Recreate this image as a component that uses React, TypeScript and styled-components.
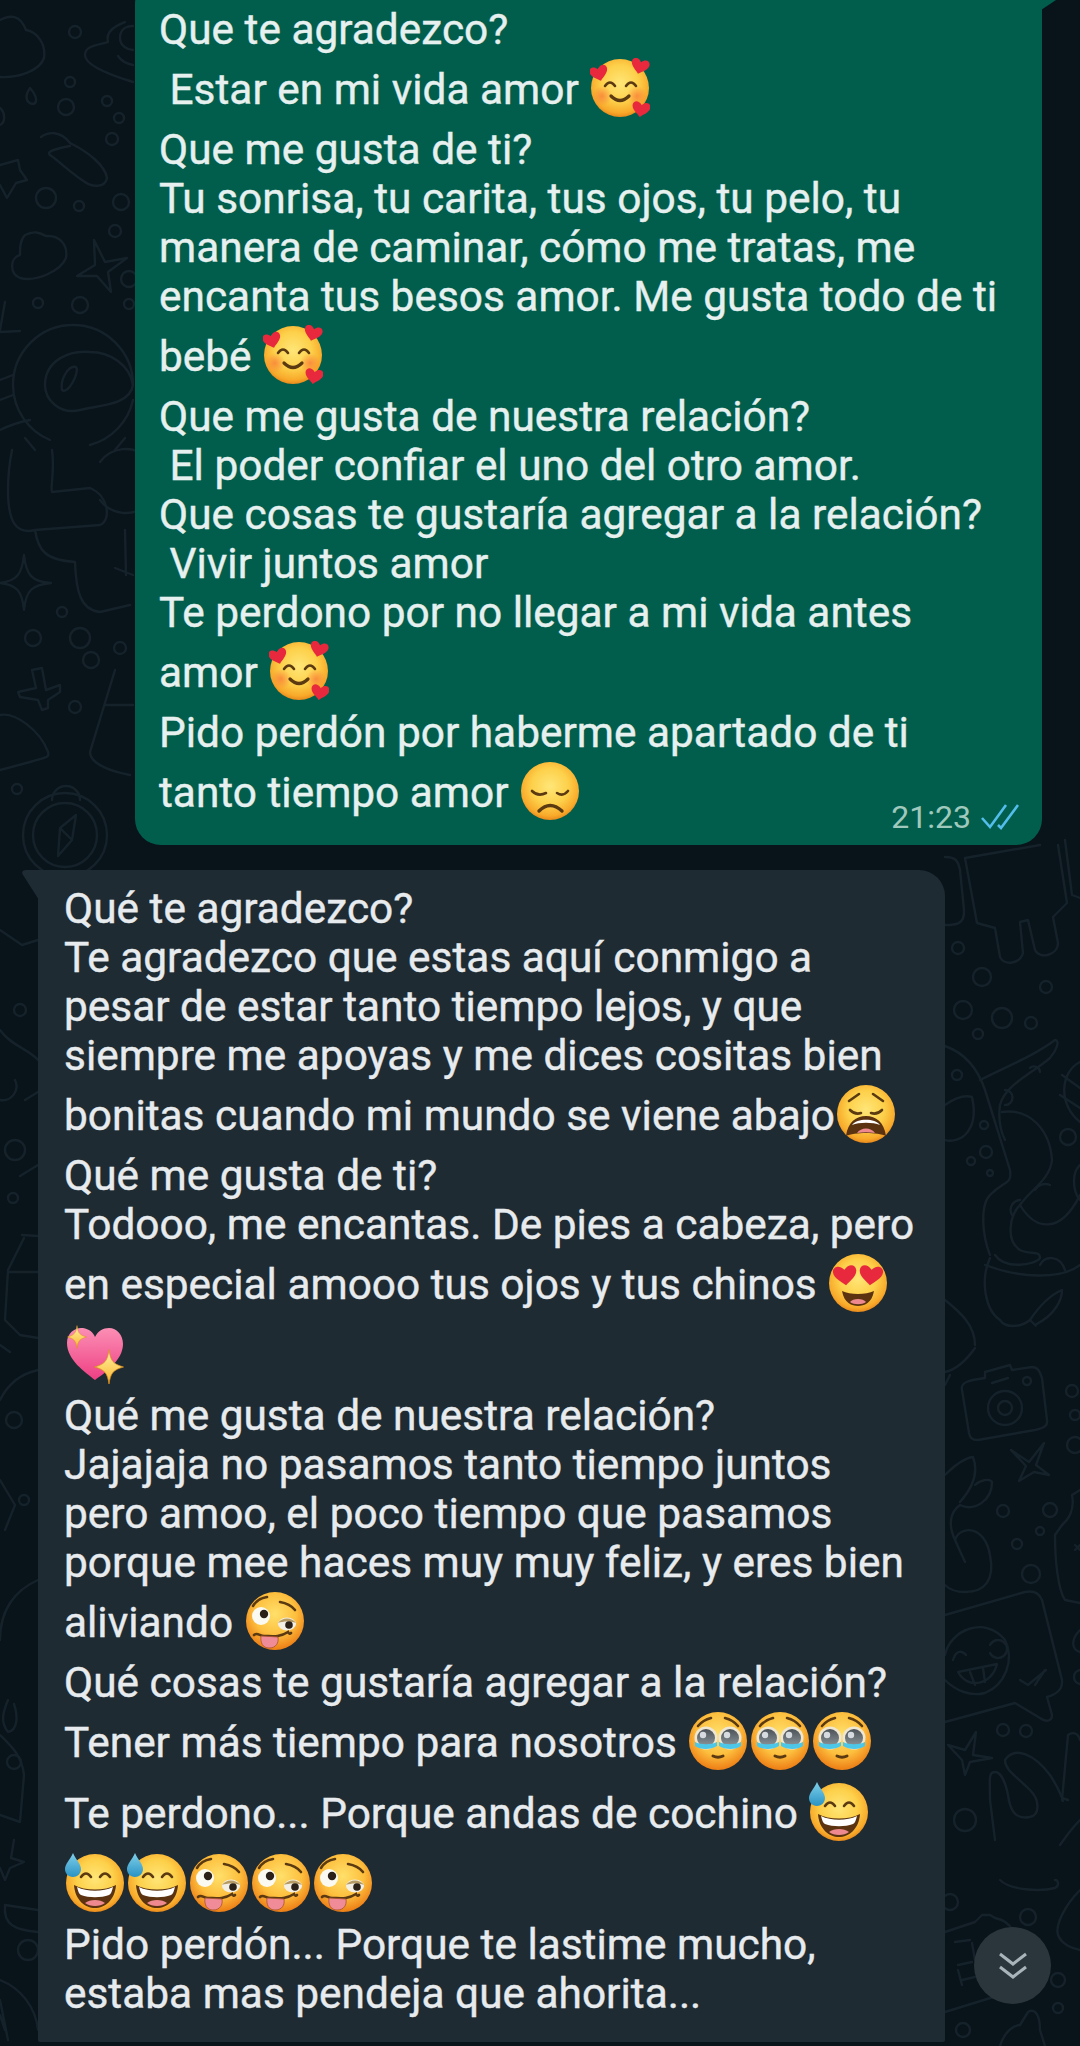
import React from 'react'
import styled, { createGlobalStyle } from 'styled-components'

const GlobalStyle = createGlobalStyle`
  html, body {
    margin: 0;
    padding: 0;
    background: #08131a;
  }
`

const Page = styled.div`
  position: relative;
  width: 1080px;
  height: 2046px;
  overflow: hidden;
  background: #08131a;
  font-family: Roboto, 'Liberation Sans', sans-serif;
`

const Wallpaper = styled.svg`
  position: absolute;
  left: 0;
  top: 0;
  width: 1080px;
  height: 2046px;
  fill: none;
  stroke: #16222a;
  stroke-width: 2.4;
  stroke-linecap: round;
  stroke-linejoin: round;
`

const Chat = styled.div`
  position: relative;
  display: flex;
  flex-direction: column;
  gap: 25px;
  margin-top: -22px;
`

const Bubble = styled.div<{ $out?: boolean }>`
  position: relative;
  box-sizing: border-box;
  width: 907px;
  margin-left: ${(p) => (p.$out ? '135px' : '38px')};
  padding: ${(p) => (p.$out ? '27px 24px 17px' : '14px 24px 24px 26px')};
  border-radius: ${(p) => (p.$out ? '26px' : '0 26px 2px 2px')};
  background: ${(p) => (p.$out ? '#025e4c' : '#1f2b33')};
  color: ${(p) => (p.$out ? '#e6f0ef' : '#e7ebee')};
`

const InTail = styled.svg`
  position: absolute;
  left: -16px;
  top: 0;
  width: 17px;
  height: 30px;
`

const OutTail = styled.svg`
  position: absolute;
  right: -14px;
  top: 22px;
  width: 15px;
  height: 10px;
`

const Line = styled.div<{ $tall?: boolean }>`
  height: ${(p) => (p.$tall ? '71px' : '49px')};
  line-height: ${(p) => (p.$tall ? '71px' : '49px')};
  font-size: 42.4px;
  -webkit-text-stroke: 0.4px currentColor;
  white-space: pre;
`

const EmojiBox = styled.svg`
  display: inline-block;
  width: 60px;
  height: 60px;
  margin: 0 1px;
  vertical-align: -14px;
`

const Meta = styled.div`
  position: absolute;
  right: 23px;
  bottom: 10px;
  display: flex;
  align-items: center;
  gap: 10px;
  height: 36px;
  font-size: 32px;
  color: #a0c9be;
`

const ScrollButton = styled.div`
  position: absolute;
  left: 974px;
  top: 1927px;
  display: flex;
  align-items: center;
  justify-content: center;
  width: 77px;
  height: 77px;
  border-radius: 50%;
  background: #2b363c;
`

const heart = (x: number, y: number, s: number, rot = 0, fill = '#e8283c') => (
  <path
    d='M0 8 C-3 5 -9 2 -9 -3 C-9 -7 -4 -9 0 -4 C4 -9 9 -7 9 -3 C9 2 3 5 0 8 Z'
    fill={fill}
    transform={`translate(${x} ${y}) rotate(${rot}) scale(${s})`}
  />
)

const Defs = () => (
  <svg width='0' height='0' style={{ position: 'absolute' }}>
    <defs>
      <radialGradient id='face' cx='50%' cy='42%' r='58%'>
        <stop offset='0%' stopColor='#ffe678' />
        <stop offset='55%' stopColor='#fdd04a' />
        <stop offset='88%' stopColor='#f8a92a' />
        <stop offset='100%' stopColor='#e98a1c' />
      </radialGradient>
      <radialGradient id='warm' cx='50%' cy='38%' r='60%'>
        <stop offset='0%' stopColor='#ffe06a' />
        <stop offset='60%' stopColor='#fdbf3e' />
        <stop offset='100%' stopColor='#ee8218' />
      </radialGradient>
      <radialGradient id='blush' cx='50%' cy='50%' r='50%'>
        <stop offset='0%' stopColor='#f9803c' stopOpacity='0.8' />
        <stop offset='100%' stopColor='#f9803c' stopOpacity='0' />
      </radialGradient>
      <linearGradient id='pink' x1='0' y1='0' x2='0' y2='1'>
        <stop offset='0%' stopColor='#fb8fb4' />
        <stop offset='100%' stopColor='#ee3f83' />
      </linearGradient>
      <linearGradient id='drop' x1='0' y1='0' x2='0' y2='1'>
        <stop offset='0%' stopColor='#7fd0ea' />
        <stop offset='100%' stopColor='#2a93c4' />
      </linearGradient>
      <linearGradient id='gold' x1='0' y1='0' x2='0' y2='1'>
        <stop offset='0%' stopColor='#fff3a8' />
        <stop offset='100%' stopColor='#f9b52a' />
      </linearGradient>
      <linearGradient id='iris' x1='0' y1='0' x2='0' y2='1'>
        <stop offset='0%' stopColor='#4c5359' />
        <stop offset='100%' stopColor='#8d979c' />
      </linearGradient>
    </defs>
  </svg>
)

const ink = { fill: 'none', stroke: '#5b3a12', strokeWidth: 2.6, strokeLinecap: 'round' } as const

const sparkle = (x: number, y: number, s: number) => (
  <path
    d='M0 -12 C1 -4 3 -2 10 0 C3 2 1 4 0 12 C-1 4 -3 2 -10 0 C-3 -2 -1 -4 0 -12 Z'
    fill='url(#gold)'
    stroke='#d98a1a'
    strokeWidth='0.5'
    transform={`translate(${x} ${y}) scale(${s})`}
  />
)

type EmojiName = 'hearts' | 'sad' | 'weary' | 'love' | 'sparkle' | 'woozy' | 'plead' | 'sweat'

const Emoji = ({ name }: { name: EmojiName }) => {
  if (name === 'sparkle') {
    return (
      <EmojiBox viewBox='0 0 60 60'>
        <path
          d='M30 56 C20 48 2 36 2 19 C2 8 11 3 18 4 C24 5 28 8 30 13 C33 7 38 4 44 4 C52 4 58 11 58 20 C58 36 40 49 30 56 Z'
          fill='url(#pink)'
        />
        {sparkle(12, 13, 0.95)}
        {sparkle(44, 43, 1.45)}
      </EmojiBox>
    )
  }
  const body = name === 'plead' || name === 'woozy' ? 'url(#warm)' : 'url(#face)'
  return (
    <EmojiBox viewBox='0 0 60 60'>
      <circle cx='30' cy='30' r='29' fill={body} />
      {name === 'hearts' && (
        <>
          <circle cx='12' cy='38' r='10' fill='url(#blush)' />
          <circle cx='47' cy='38' r='10' fill='url(#blush)' />
          <path d='M15 28 q5 -7 10 0' {...ink} />
          <path d='M36 28 q5 -7 10 0' {...ink} />
          <path d='M21 38 q9 9 18 0' {...ink} strokeWidth='3.2' />
          {heart(9, 15, 1.0, -15)}
          {heart(50, 8, 1.0, 15)}
          {heart(51, 51, 1.0, 10)}
        </>
      )}
      {name === 'sad' && (
        <>
          <path d='M12 30 q6 6 14 2' {...ink} />
          <path d='M37 32 q6 4 11 -2' {...ink} />
          <path d='M19 50 q11 -11 23 0' {...ink} strokeWidth='3.4' />
        </>
      )}
      {name === 'weary' && (
        <>
          <path d='M13 17 L23 10' {...ink} />
          <path d='M47 17 L37 10' {...ink} />
          <path d='M14 26 q5 5 11 3' {...ink} />
          <path d='M46 26 q-5 5 -11 3' {...ink} />
          <path d='M10 52 C12 38 20 32 30 32 C40 32 48 38 50 52 C42 48 18 48 10 52 Z' fill='#5b3310' />
          <path d='M16 41 C21 34 39 34 44 41 C37 38 23 38 16 41 Z' fill='#fff' />
          <path d='M21 49 C25 43 35 43 39 49 C33 48 27 48 21 49 Z' fill='#ee8a8f' />
        </>
      )}
      {name === 'love' && (
        <>
          {heart(17, 22, 1.3, -6)}
          {heart(43, 22, 1.3, 6)}
          <path d='M14 38 C22 42 38 42 46 38 C44 50 36 53 30 53 C24 53 16 50 14 38 Z' fill='#5b3310' />
          <path d='M22 49 C25 45 35 45 38 49 C34 52 26 52 22 49 Z' fill='#ee8a8f' />
        </>
      )}
      {name === 'woozy' && (
        <>
          <path d='M8 15 C11 10 16 7 22 6' {...ink} />
          <path d='M35 11 C41 12 46 14 50 19' {...ink} />
          <circle cx='16' cy='25' r='9' fill='#fbfaf2' />
          <circle cx='19' cy='23' r='4.2' fill='#2b2118' />
          <ellipse cx='42' cy='33' rx='9' ry='6.5' fill='#f3efe4' />
          <path d='M33 32 C37 26 47 26 51 32 C46 30 38 30 33 32 Z' fill='#b59a63' />
          <circle cx='44' cy='34' r='3.8' fill='#2b2118' />
          <path d='M9 44 C12 41 15 45 19 45 C26 45 34 47 43 41 C44 43 45 43 46 42' {...ink} />
          <path d='M16 45 C15 52 18 57 24 57 C31 57 34 52 33 46 Z' fill='#f08c98' stroke='#a8512f' strokeWidth='0.8' />
        </>
      )}
      {name === 'plead' && (
        <>
          <path d='M10 15 q5 -6 13 -8' {...ink} />
          <path d='M37 7 q8 2 13 8' {...ink} />
          <circle cx='18' cy='27' r='11.5' fill='#efe7d2' />
          <circle cx='42' cy='27' r='11.5' fill='#efe7d2' />
          <circle cx='18' cy='27' r='9' fill='url(#iris)' />
          <circle cx='42' cy='27' r='9' fill='url(#iris)' />
          <circle cx='15' cy='24' r='3.2' fill='#d5dbde' />
          <circle cx='39' cy='24' r='3.2' fill='#d5dbde' />
          <path d='M7 31 C13 34 23 34 29 31 L29 35 C23 39 12 39 7 35 Z' fill='#4cc7e8' />
          <path d='M31 31 C37 34 47 34 53 31 L53 35 C48 39 37 39 31 35 Z' fill='#4cc7e8' />
          <path d='M25 45 q5 2.5 10 0' {...ink} strokeWidth='3' />
        </>
      )}
      {name === 'sweat' && (
        <>
          <path d='M16 24 q5 -7 10 0' {...ink} />
          <path d='M35 24 q5 -7 10 0' {...ink} />
          <path d='M9 32 C20 38 40 38 51 32 C50 47 40 55 30 55 C20 55 10 47 9 32 Z' fill='#5b3310' />
          <path d='M12 34 C22 39 38 39 48 34 C47 38 46 41 44 42 C36 45 24 45 16 42 C14 41 13 38 12 34 Z' fill='#fff' />
          <path d='M20 50 C25 46 35 46 40 50 C35 54 25 54 20 50 Z' fill='#ee8a8f' />
          <path d='M8 0 C11 7 16 11 16 16 C16 21 12 24 8 24 C3 24 0 20 0 16 C0 11 5 7 8 0 Z' fill='url(#drop)' />
        </>
      )}
    </EmojiBox>
  )
}

type Row = { text?: string; emojis?: EmojiName[] }

const sent: Row[] = [
  { text: 'Que te agradezco?' },
  { text: ' Estar en mi vida amor ', emojis: ['hearts'] },
  { text: 'Que me gusta de ti?' },
  { text: 'Tu sonrisa, tu carita, tus ojos, tu pelo, tu' },
  { text: 'manera de caminar, cómo me tratas, me' },
  { text: 'encanta tus besos amor. Me gusta todo de ti' },
  { text: 'bebé ', emojis: ['hearts'] },
  { text: 'Que me gusta de nuestra relación?' },
  { text: ' El poder confiar el uno del otro amor.' },
  { text: 'Que cosas te gustaría agregar a la relación?' },
  { text: ' Vivir juntos amor' },
  { text: 'Te perdono por no llegar a mi vida antes' },
  { text: 'amor ', emojis: ['hearts'] },
  { text: 'Pido perdón por haberme apartado de ti' },
  { text: 'tanto tiempo amor ', emojis: ['sad'] },
]

const received: Row[] = [
  { text: 'Qué te agradezco?' },
  { text: 'Te agradezco que estas aquí conmigo a' },
  { text: 'pesar de estar tanto tiempo lejos, y que' },
  { text: 'siempre me apoyas y me dices cositas bien' },
  { text: 'bonitas cuando mi mundo se viene abajo', emojis: ['weary'] },
  { text: 'Qué me gusta de ti?' },
  { text: 'Todooo, me encantas. De pies a cabeza, pero' },
  { text: 'en especial amooo tus ojos y tus chinos ', emojis: ['love'] },
  { emojis: ['sparkle'] },
  { text: 'Qué me gusta de nuestra relación?' },
  { text: 'Jajajaja no pasamos tanto tiempo juntos' },
  { text: 'pero amoo, el poco tiempo que pasamos' },
  { text: 'porque mee haces muy muy feliz, y eres bien' },
  { text: 'aliviando ', emojis: ['woozy'] },
  { text: 'Qué cosas te gustaría agregar a la relación?' },
  { text: 'Tener más tiempo para nosotros ', emojis: ['plead', 'plead', 'plead'] },
  { text: 'Te perdono... Porque andas de cochino ', emojis: ['sweat'] },
  { emojis: ['sweat', 'sweat', 'woozy', 'woozy', 'woozy'] },
  { text: 'Pido perdón... Porque te lastime mucho,' },
  { text: 'estaba mas pendeja que ahorita...' },
]

const Rows = ({ rows }: { rows: Row[] }) => (
  <>
    {rows.map((row, i) => (
      <Line key={i} $tall={!!row.emojis}>
        {row.text}
        {row.emojis?.map((name, j) => <Emoji key={j} name={name} />)}
      </Line>
    ))}
  </>
)

// x, y, r of the small rings scattered over the wallpaper
const rings = [
  [75, 32, 6], [70, 82, 5], [66, 107, 8], [107, 101, 5], [119, 118, 5], [112, 139, 6], [46, 198, 10],
  [79, 206, 5], [121, 202, 8], [115, 231, 6], [38, 303, 5], [80, 305, 8], [129, 279, 8], [129, 304, 5],
  [62, 612, 5], [33, 638, 8], [80, 638, 10], [91, 660, 8], [120, 648, 6], [75, 707, 6], [17, 789, 5],
  [958, 948, 6], [982, 977, 9], [963, 1010, 9], [1002, 1018, 10], [1031, 1023, 6], [978, 1034, 5], [1046, 987, 6],
  [957, 1075, 5], [984, 1125, 4], [986, 1152, 6], [971, 1161, 4], [990, 1173, 3], [1068, 1137, 8],
  [1003, 1511, 6], [1050, 1510, 7], [1040, 1531, 4], [1017, 1544, 5], [1031, 1574, 9],
  [1072, 1391, 6], [1075, 1415, 5], [1075, 1445, 8], [1003, 1730, 6], [1026, 1731, 6], [965, 1820, 11],
  [950, 1902, 8], [1028, 1917, 8], [1058, 1980, 7], [1058, 2008, 5], [963, 2030, 7],
  [15, 1150, 10], [13, 1198, 5], [28, 1950, 10], [14, 1762, 7], [20, 1010, 6], [14, 1420, 8], [24, 1500, 5],
]

const doodles = [
  // top left clouds and comet
  'M0 20 C10 15 20 14 26 30 C38 32 46 45 44 58 C40 70 20 78 0 77',
  'M30 88 C25 95 25 103 33 104 C38 103 37 96 30 88 Z',
  'M0 108 C5 112 6 122 0 125',
  'M41 137 C48 132 60 130 70 143 C88 152 105 165 107 178 C105 188 92 188 82 180 C70 172 60 162 50 155 C45 151 60 148 70 146',
  'M0 165 L18 160 L20 170 L27 180 L16 183 L7 198 L0 185',
  'M25 235 C35 230 40 233 46 236 C60 235 68 245 66 258 C60 272 35 282 20 278 C10 274 9 258 20 255 C20 248 20 240 25 235 Z',
  'M94 240 L105 262 L127 258 L108 272 L111 292 L97 276 L77 276 L95 265 Z',
  'M133 82 C110 75 85 65 85 55 C85 45 100 45 108 42 C105 30 118 25 125 22',
  'M118 56 C122 62 128 64 133 65',
  'M120 38 C120 28 128 26 133 26 M120 38 C120 46 128 50 133 50',
  'M0 330 L5 302 M0 332 L20 331',
  // planet
  'M13 385 A60 60 0 1 1 133 385 M13 385 A60 60 0 0 0 50 440 M90 445 A60 60 0 0 0 133 400',
  'M45 385 C45 360 70 350 90 352 C110 352 130 365 133 385 C130 405 100 405 80 410 C60 415 45 400 45 385 Z',
  'M62 390 C60 380 68 365 76 367 C80 372 68 395 62 390 Z',
  'M0 430 C10 425 20 422 30 420 M35 450 L25 438 M115 450 L125 438 M13 375 L0 380 M13 395 L0 400',
  // astronaut bits
  'M52 450 C55 470 50 490 52 492 L90 488 C108 495 112 520 100 525 L35 530 C15 535 8 520 8 490 C8 470 10 460 12 450',
  'M35 530 C38 550 45 560 75 562 C76 590 80 610 100 612 L130 605 M115 568 L133 575 M125 530 L126 575',
  'M100 462 A32 32 0 1 1 100 500',
  'M24 555 C26 575 32 582 51 583 C32 585 26 590 24 610 C22 590 16 585 0 583 C16 581 22 575 24 555 Z',
  'M32 670 L42 668 L46 690 L60 685 L60 692 L48 700 L48 708 L42 710 L38 700 L20 697 L18 692 L36 688 Z',
  'M0 715 C15 712 40 730 48 752 C50 758 45 757 30 762 L0 770',
  'M115 670 L90 752 C90 765 115 772 130 775 M105 705 L133 705',
  // compass
  'M23 835 A42 42 0 1 0 107 835 A42 42 0 1 0 23 835 Z',
  'M33 835 A32 32 0 1 0 97 835 A32 32 0 1 0 33 835 Z',
  'M52 800 A14 14 0 1 1 80 800',
  'M58 856 L60 828 L76 815 L72 840 Z M60 828 L72 840',
  // lower left strip
  'M8 1700 C3 1712 0 1722 8 1732 C18 1730 18 1716 14 1704',
  'M0 1735 C10 1745 22 1755 24 1775 L20 1822 L0 1815',
  'M14 1840 L11 1858 L24 1862 L10 1868 L5 1880 L0 1868',
  'M5 1905 L38 1910 M5 1905 C3 1925 15 1930 38 1932',
  'M0 1980 A60 60 0 0 1 38 2030 M0 2000 L8 2040 M0 2015 L5 2030',
  'M22 1235 L38 1236 M24 1238 L8 1270 L5 1320 L20 1335 L38 1338 M8 1272 L38 1272',
  'M38 1165 L20 1176 M0 1345 L10 1352 M38 1370 C15 1375 5 1390 0 1400',
  'M15 1080 A14 14 0 0 1 0 1100 M38 1092 L25 1100',
  'M0 930 L22 945 L38 940 M0 1030 C10 1045 30 1050 38 1060',
  'M0 1480 L15 1505 L5 1530 M38 1580 C15 1590 0 1610 0 1640',
  // mitt under the sent bubble
  'M965 858 L1040 845 M965 858 L977 923 L995 928 L1000 957 C1004 966 1020 964 1023 953 L1020 922 L1028 920 L1035 950 C1040 960 1058 955 1058 943 L1053 917 L1067 903 L1058 845',
  'M945 857 C955 857 958 860 960 870 L964 910 C965 925 955 925 945 925',
  'M1065 840 L1072 895 L1080 898',
  // octopus
  'M945 1046 C970 1055 980 1075 985 1090 L1010 1170 C1012 1185 1005 1180 990 1195 C980 1205 982 1235 990 1255',
  'M980 1080 C1010 1065 1035 1055 1055 1040 C1060 1040 1057 1050 1050 1058 C1030 1075 1005 1085 1000 1105 C998 1120 1000 1130 1005 1140',
  'M1002 1112 C1030 1108 1050 1130 1052 1160 C1050 1180 1030 1190 1020 1205 C1010 1215 1005 1240 1020 1250 C1030 1255 1040 1250 1040 1258 C1035 1265 1005 1270 995 1255',
  'M1020 1205 C1035 1230 1060 1235 1080 1195',
  'M985 1265 C1020 1278 1060 1280 1080 1265',
  'M990 1258 C980 1280 985 1310 1000 1320 C1005 1328 1020 1328 1030 1320 C1040 1330 1035 1325 1030 1320 C1040 1305 1050 1295 1062 1290 C1062 1300 1055 1315 1035 1325',
  'M1005 1105 A7 7 0 0 0 1005 1090 M1040 1072 A6 6 0 0 0 1030 1068 M1050 1185 A12 12 0 0 0 1035 1190 M1020 1200 A10 10 0 0 0 1012 1215',
  'M1040 1265 C1045 1255 1060 1255 1065 1270',
  'M945 1105 C955 1098 965 1095 972 1097 C975 1110 975 1125 965 1135 C960 1140 950 1142 945 1140',
  'M1080 1062 C1060 1072 1058 1105 1080 1122 M1062 1075 L1080 1088 M1060 1095 L1080 1108',
  'M1080 1165 C1072 1172 1072 1190 1080 1200',
  'M945 1300 C960 1312 975 1325 975 1345 M945 1385 L950 1375 M975 1348 C965 1362 955 1370 945 1372',
  // camera
  'M962 1390 C960 1382 970 1380 985 1378 L985 1372 L1010 1365 L1012 1370 L1032 1367 C1038 1367 1040 1372 1042 1378 L1047 1420 C1048 1425 1045 1428 1035 1430 L978 1440 C972 1440 970 1438 969 1433 Z',
  'M988 1408 A17 17 0 1 0 1022 1408 A17 17 0 1 0 988 1408 Z',
  'M998 1408 A7 7 0 1 0 1012 1408 A7 7 0 1 0 998 1408 Z',
  'M1023 1381 A4 4 0 1 0 1031 1381 A4 4 0 1 0 1023 1381 Z M992 1383 L1008 1378',
  'M1011 1450 L1029 1462 L1044 1443 L1036 1465 L1049 1475 L1034 1472 L1019 1481 L1026 1466 Z',
  // plant
  'M945 1475 C955 1465 965 1458 973 1457 C978 1470 975 1485 960 1502 M975 1485 C980 1480 990 1478 992 1482 C992 1500 975 1512 960 1505 C950 1512 948 1525 955 1540 L965 1562',
  'M955 1540 C960 1525 985 1525 990 1555 C995 1580 985 1592 965 1592 C955 1592 950 1590 945 1585',
  // right blob
  'M1080 1490 L1072 1495 C1075 1510 1068 1520 1062 1525 L1055 1535 C1055 1560 1058 1590 1065 1600 L1080 1603',
  'M1075 1545 L1080 1550 M1075 1550 L1080 1545 M1080 1630 C1070 1640 1072 1650 1080 1652 M1080 1670 C1072 1672 1072 1682 1080 1684',
  // sticker with winking face
  'M945 1615 L1025 1592 C1035 1590 1040 1595 1042 1600 L1062 1680 C1063 1690 1055 1695 1047 1697 L1052 1715 C1052 1722 1045 1722 1040 1718 L1015 1703 L945 1722',
  'M945 1655 C950 1630 985 1615 1005 1640 C1015 1660 1005 1685 985 1693 C970 1697 955 1690 945 1680',
  'M953 1660 C956 1650 962 1650 966 1655 M990 1645 A9 9 0 1 1 990 1653',
  'M958 1672 L997 1664 C992 1685 968 1690 958 1672 Z M970 1672 L975 1685 M983 1668 L985 1682',
  'M1020 1680 L1028 1685 L1046 1670 M1035 1685 L1045 1670',
  // star and hand
  'M976 1732 L973 1755 L992 1758 L970 1762 L965 1775 L962 1760 L948 1745 L965 1750 Z',
  'M1005 1760 C1015 1745 1035 1755 1050 1775 C1060 1790 1065 1805 1062 1800 M1005 1760 C1005 1770 1015 1775 1030 1790 C1040 1800 1040 1815 1030 1817 C1015 1820 1010 1810 1008 1795 C1005 1780 1000 1772 995 1772 C988 1772 990 1780 990 1800 L995 1840',
  'M1062 1800 L1068 1735 C1072 1732 1078 1732 1080 1740 M1068 1800 L1062 1798',
  'M1080 1820 C1070 1830 1065 1838 1060 1845',
  // clock behind the scroll button
  'M945 1932 L975 1922 L982 1915 L990 1915 L995 1918 C1005 1920 1010 1925 1012 1930 M945 2012 L1000 1995',
  'M955 1942 L970 1940 M972 1943 L975 1960 M958 1965 L972 1962 M958 1970 L962 1985 M962 1980 L975 1977',
  'M1000 1880 C1010 1890 1040 1892 1055 1888 C1060 1885 1058 1880 1055 1880',
  'M1080 1890 C1065 1905 1055 1925 1058 1935 C1062 1945 1072 1948 1080 1950',
  'M1000 2046 C1005 2030 1015 2025 1020 2025 L1028 2012 C1035 2008 1040 2015 1040 2030 L1045 2046',
]

const App = () => (
  <Page>
    <GlobalStyle />
    <Defs />
    <Wallpaper viewBox='0 0 1080 2046'>
      {rings.map(([x, y, r], i) => (
        <circle key={i} cx={x} cy={y} r={r} />
      ))}
      {doodles.map((d, i) => (
        <path key={i} d={d} />
      ))}
    </Wallpaper>
    <Chat>
      <Bubble $out>
        <OutTail viewBox='0 0 15 10'>
          <path d='M0 10 L0 0 L15 0 Z' fill='#025e4c' />
        </OutTail>
        <Rows rows={sent} />
        <Meta>
          21:23
          <svg width='38' height='26' viewBox='0 0 38 26' fill='none' stroke='#53bdeb' strokeWidth='2.6'>
            <path d='M1 14 L9 23 L25 1' />
            <path d='M17 21 L20 24 L37 1' />
          </svg>
        </Meta>
      </Bubble>
      <Bubble>
        <InTail viewBox='0 0 17 30'>
          <path d='M17 30 L1 5 C-1 2 1 0 4 0 L17 0 Z' fill='#1f2b33' />
        </InTail>
        <Rows rows={received} />
      </Bubble>
    </Chat>
    <ScrollButton>
      <svg width='30' height='28' viewBox='0 0 30 28' fill='none' stroke='#a9b4ba' strokeWidth='3'>
        <path d='M2 2 L15 12 L28 2' />
        <path d='M2 15 L15 25 L28 15' />
      </svg>
    </ScrollButton>
  </Page>
)

export default App
